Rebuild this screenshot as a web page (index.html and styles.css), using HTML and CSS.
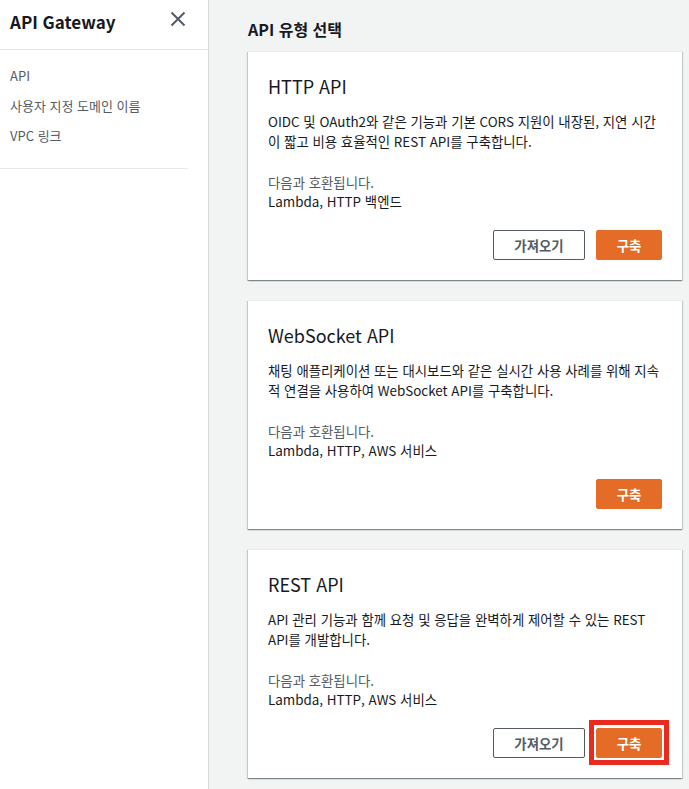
FILE: index.html
```html
<!DOCTYPE html>
<html lang="ko">
<head>
<meta charset="utf-8">
<title>API Gateway</title>
<link rel="stylesheet" href="styles.css">
</head>
<body>
<div class="app">
  <aside class="sidebar">
    <div class="side-head">
      <span class="side-title">API Gateway</span>
      <button class="close" aria-label="닫기">
        <svg width="16" height="16" viewBox="0 0 16 16"><path d="M1.5 1.5 L14.5 14.5 M14.5 1.5 L1.5 14.5" stroke="#545b64" stroke-width="2" fill="none"/></svg>
      </button>
    </div>
    <nav class="side-nav">
      <a class="nav-item">API</a>
      <a class="nav-item">사용자 지정 도메인 이름</a>
      <a class="nav-item">VPC 링크</a>
    </nav>
    <div class="side-divider"></div>
  </aside>
  <main class="main">
    <h2 class="page-title">API 유형 선택</h2>
    <section class="card">
      <h3 class="card-title">HTTP API</h3>
      <p class="desc">OIDC 및 OAuth2와 같은 기능과 기본 CORS 지원이 내장된, 지연 시간이 짧고 비용 효율적인 REST API를 구축합니다.</p>
      <div class="compat">
        <div class="compat-label">다음과 호환됩니다.</div>
        <div class="compat-value">Lambda, HTTP 백엔드</div>
      </div>
      <div class="actions">
        <button class="btn btn-normal">가져오기</button>
        <button class="btn btn-primary">구축</button>
      </div>
    </section>
    <section class="card">
      <h3 class="card-title">WebSocket API</h3>
      <p class="desc">채팅 애플리케이션 또는 대시보드와 같은 실시간 사용 사례를 위해 지속적 연결을 사용하여 WebSocket API를 구축합니다.</p>
      <div class="compat">
        <div class="compat-label">다음과 호환됩니다.</div>
        <div class="compat-value">Lambda, HTTP, AWS 서비스</div>
      </div>
      <div class="actions">
        <button class="btn btn-primary">구축</button>
      </div>
    </section>
    <section class="card">
      <h3 class="card-title">REST API</h3>
      <p class="desc">API 관리 기능과 함께 요청 및 응답을 완벽하게 제어할 수 있는 REST API를 개발합니다.</p>
      <div class="compat">
        <div class="compat-label">다음과 호환됩니다.</div>
        <div class="compat-value">Lambda, HTTP, AWS 서비스</div>
      </div>
      <div class="actions">
        <button class="btn btn-normal">가져오기</button>
        <button class="btn btn-primary btn-highlight">구축</button>
      </div>
    </section>
  </main>
</div>
</body>
</html>
```

FILE: styles.css
```css
* { box-sizing: border-box; }
html, body { margin: 0; padding: 0; }
body {
  font-family: "Noto Sans CJK KR", "Noto Sans", sans-serif;
  color: #16191f;
  background: #f2f3f3;
  overflow: hidden;
}
.app {
  display: flex;
  min-height: 789px;
}
.sidebar {
  width: 209px;
  flex: none;
  background: #fff;
  border-right: 1px solid #d5dbdb;
  min-height: 789px;
}
.side-head {
  height: 50px;
  border-bottom: 1px solid #e6e9e9;
  display: flex;
  align-items: center;
  justify-content: space-between;
  padding: 0 22px 0 10px;
}
.side-title {
  font-size: 17px;
  font-weight: 700;
  color: #16191f;
  margin-top: -7px;
}
.close {
  border: 0;
  background: none;
  padding: 0;
  width: 16px;
  height: 16px;
  margin-top: -12px;
  display: flex;
}
.side-nav {
  display: flex;
  flex-direction: column;
  padding: 11px 0 0 10px;
}
.nav-item {
  font-size: 13px;
  line-height: 30px;
  color: #545b64;
}
.side-divider {
  margin: 17px 20px 0 0;
  border-top: 1px solid #e6e9e9;
}
.main {
  padding: 15px 0 0 39px;
  display: flex;
  flex-direction: column;
  gap: 20px;
  width: 473px;
}
.page-title {
  margin: 0 0 -12px;
  font-size: 16px;
  font-weight: 700;
  line-height: 28px;
}
.card {
  width: 434px;
  height: 229px;
  background: #fff;
  padding: 20px;
  box-shadow: 0 1px 1px 0 rgba(0,28,36,.3), 1px 1px 1px 0 rgba(0,28,36,.15), -1px 1px 1px 0 rgba(0,28,36,.15);
  border-top: 1px solid #eaeded;
  display: flex;
  flex-direction: column;
}
.card-title {
  margin: 0;
  font-size: 18px;
  font-weight: 400;
  line-height: 28px;
}
.desc {
  margin: 11px 0 0;
  font-size: 13.4px;
  line-height: 20px;
}
.compat {
  margin-top: 22px;
  font-size: 13.4px;
  line-height: 19px;
}
.compat-label { color: #545b64; }
.actions {
  margin-top: auto;
  display: flex;
  justify-content: flex-end;
  gap: 11px;
}
.btn {
  height: 30px;
  font-family: inherit;
  font-size: 13.4px;
  font-weight: 700;
  border-radius: 2px;
  padding: 0;
}
.btn-normal {
  width: 92px;
  background: #fff;
  border: 1px solid #545b64;
  color: #545b64;
}
.btn-primary {
  width: 66px;
  background: #e46c27;
  border: 1px solid #e46c27;
  color: #fff;
}
.btn-highlight {
  position: relative;
}
.btn-highlight::after {
  content: "";
  position: absolute;
  top: -9px;
  left: -8px;
  right: -8px;
  bottom: -8px;
  border: 5px solid #ea2a1e;
  pointer-events: none;
}
```
